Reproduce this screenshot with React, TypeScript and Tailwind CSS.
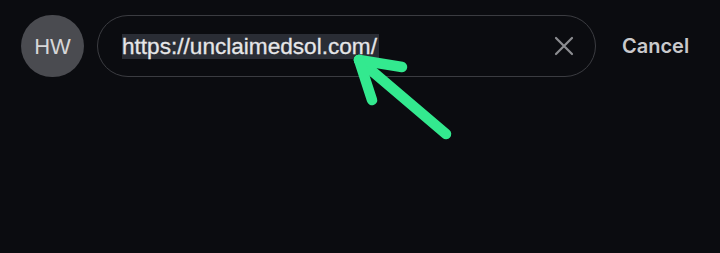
export default function App() {
  return (
    <main className="relative w-[720px] h-[253px] bg-[#0b0c10] overflow-hidden" style={{ fontFamily: '"Liberation Sans", Arial, sans-serif' }}>
      <div className="flex items-center pl-[21px] pt-[15px]">
        <div className="w-[63px] h-[62px] rounded-full bg-[#4a4b50] flex items-center justify-center text-[22px] text-[#d6d6d8] shrink-0">
          HW
        </div>
        <div className="ml-[13px] w-[499px] h-[62px] rounded-full border-[1.5px] border-[#3b3c41] flex items-center pl-[24px] pr-[21px]">
          <span className="text-[22.6px] leading-[25px] text-[#e6e6e8] bg-[#2a2d35] pr-[2px] [-webkit-text-stroke:0.3px_#e6e6e8]">https://unclaimedsol.com/</span>
          <div className="flex-1" />
          <svg width="20" height="20" viewBox="0 0 20 20" className="shrink-0">
            <path d="M2 2 L18 18 M18 2 L2 18" stroke="#8c8d91" strokeWidth="2.2" strokeLinecap="round" />
          </svg>
        </div>
        <button className="ml-[26px] text-[20px] font-semibold text-[#c9c9cc]" style={{ fontFamily: 'Inter, "Liberation Sans", sans-serif' }}>
          Cancel
        </button>
      </div>

      {/* green annotation arrow */}
      <svg className="absolute inset-0 pointer-events-none" width="720" height="253" viewBox="0 0 720 253">
        <g stroke="#33e98f" strokeWidth="10.5" strokeLinecap="round" strokeLinejoin="round" fill="none">
          <path d="M446 134 L359 60" />
          <path d="M359 60 L402 67" />
          <path d="M359 60 L372 100" />
        </g>
      </svg>
    </main>
  )
}
